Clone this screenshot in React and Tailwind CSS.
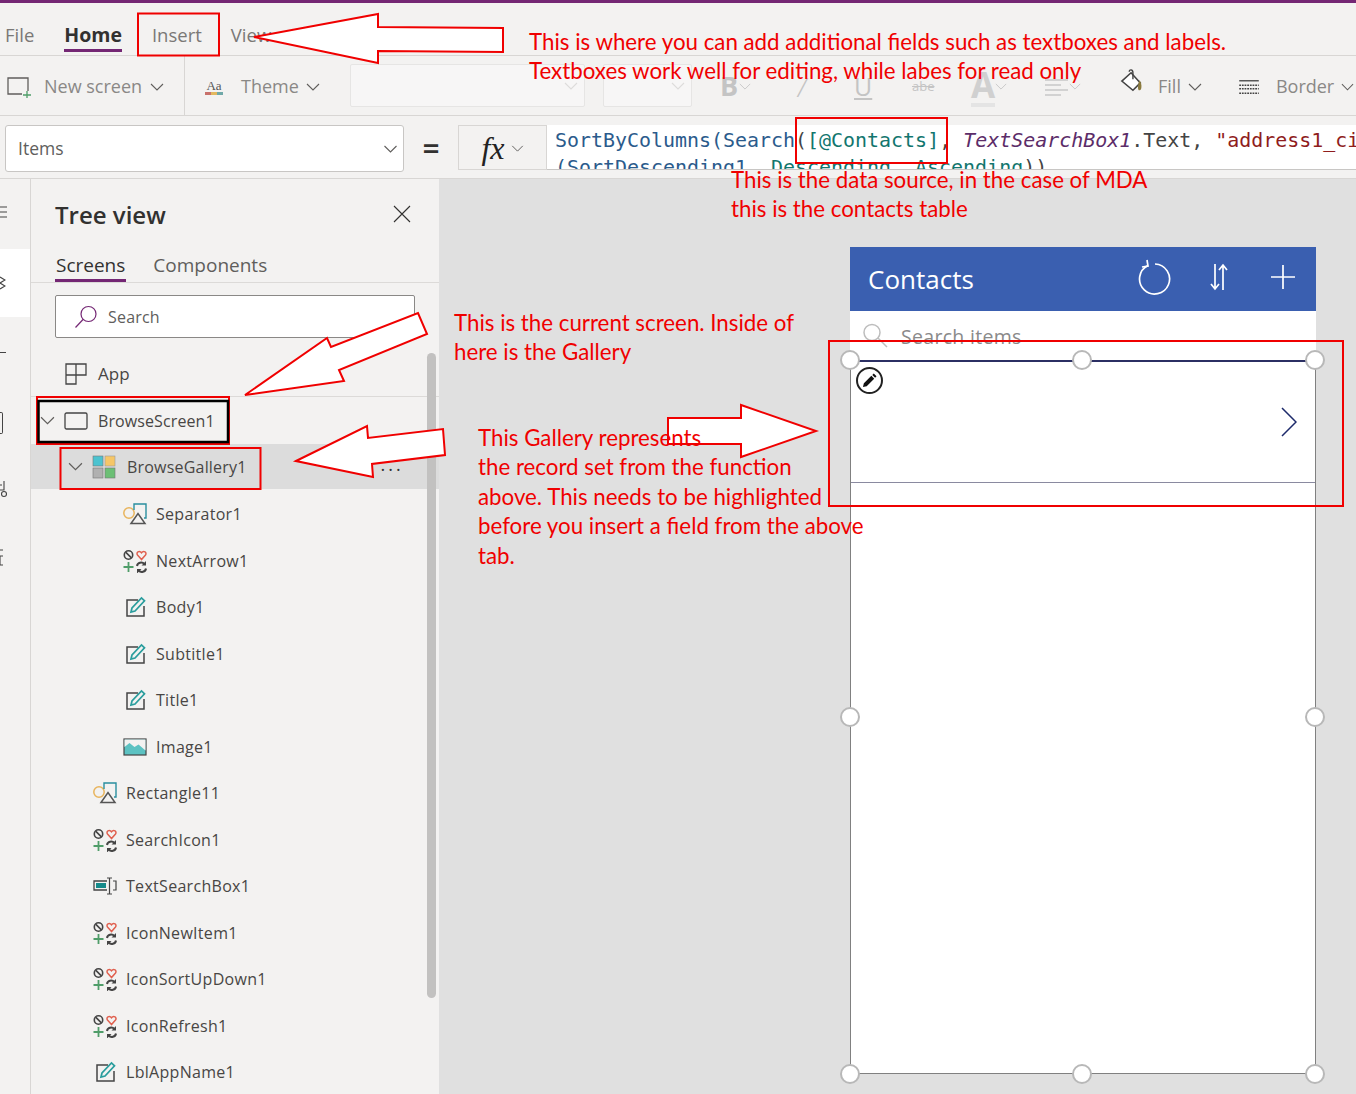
import React from 'react';

const Chevron = ({ className = 'w-[14px] h-[8px]', color = '#605e5c' }) => (
  <svg viewBox="0 0 14 8" className={className} fill="none" stroke={color} strokeWidth="1.1">
    <path d="M1 1l6 6 6-6" />
  </svg>
);

// little icons in the tree
const ControlsIcon = () => (
  <svg viewBox="0 0 24 24" className="w-[24px] h-[24px]" fill="none">
    <circle cx="5.5" cy="6" r="4.2" stroke="#444" strokeWidth="1.6" />
    <path d="M2.600 3.100l5.800 5.800" stroke="#444" strokeWidth="1.6" />
    <path d="M18.500 10.500l-4-4.500c-1.800-2.400 1.800-5 4-2.200 2.200-2.800 5.800-.2 4 2.200z" stroke="#e0604f" strokeWidth="1.500" />
    <path d="M0.500 18h10M5.500 13v10" stroke="#4f9d69" strokeWidth="1.800" />
    <path d="M14 17c.5-3.500 5-4.500 7.500-2M23 19.500c-.5 3.500-5 4.500-7.500 2" stroke="#444" strokeWidth="2" />
    <path d="M23 12v4.500h-4.500zM14 24.500V20h4.500z" fill="#444" />
  </svg>
);

const EditIcon = () => (
  <svg viewBox="0 0 24 24" className="w-[24px] h-[24px]" fill="none">
    <path d="M15 5H4v16h17V11" stroke="#444" strokeWidth="1.500" />
    <path d="M8 17l1-4L18.500 3l3 2.800L12 16z" stroke="#2a9d9d" strokeWidth="1.700" />
  </svg>
);

const ShapesIcon = () => (
  <svg viewBox="0 0 24 24" className="w-[24px] h-[24px]" fill="none">
    <circle cx="6" cy="11" r="5.200" stroke="#e8b45c" strokeWidth="1.500" />
    <path d="M11 8V2h12v14h-2" stroke="#2a8f9f" strokeWidth="1.400" />
    <path d="M8 21.500l7-10 7 10z" stroke="#555" strokeWidth="1.500" fill="#f3f2f1" />
  </svg>
);

const ImageIcon = () => (
  <svg viewBox="0 0 24 24" className="w-[24px] h-[24px]" fill="none">
    <rect x="1" y="4" width="22" height="16" fill="#5cc2c2" stroke="#444" strokeWidth="1.200" />
    <path d="M1.500 12l5-4 5 4 4-2.500 7 6V4.600h-21z" fill="#f3f2f1" />
  </svg>
);

const TextBoxIcon = () => (
  <svg viewBox="0 0 24 24" className="w-[24px] h-[24px]" fill="none">
    <path d="M14 7H1v9h13" stroke="#444" strokeWidth="1.300" />
    <rect x="3" y="9" width="10" height="5" fill="#158a8a" />
    <path d="M14 4h5M14 20h5M16.500 4v16M20 7h3v9h-3" stroke="#444" strokeWidth="1.200" />
  </svg>
);

const GalleryIcon = () => (
  <svg viewBox="0 0 24 24" className="w-[24px] h-[24px]">
    <rect x="1" y="1" width="10" height="10" fill="#4cc3d0" stroke="#777" strokeWidth=".6" />
    <rect x="13" y="1" width="10" height="10" fill="#f6c667" stroke="#999" strokeWidth=".6" />
    <rect x="1" y="13" width="10" height="10" fill="#b0b0b0" stroke="#777" strokeWidth=".6" />
    <rect x="13" y="13" width="10" height="10" fill="#6cbf75" stroke="#777" strokeWidth=".6" />
  </svg>
);

const ScreenIcon = () => (
  <svg viewBox="0 0 24 24" className="w-[24px] h-[24px]" fill="none">
    <rect x="1" y="4" width="22" height="16" rx="1.500" stroke="#444" strokeWidth="1.300" />
  </svg>
);

const AppIcon = () => (
  <svg viewBox="0 0 24 24" className="w-[24px] h-[24px]" fill="none" stroke="#444" strokeWidth="1.300">
    <path d="M2 13h20V2H12v20H2V2h10" />
  </svg>
);

const treeRows = [
  { name: 'Separator1', Icon: ShapesIcon, level: 3 },
  { name: 'NextArrow1', Icon: ControlsIcon, level: 3 },
  { name: 'Body1', Icon: EditIcon, level: 3 },
  { name: 'Subtitle1', Icon: EditIcon, level: 3 },
  { name: 'Title1', Icon: EditIcon, level: 3 },
  { name: 'Image1', Icon: ImageIcon, level: 3 },
  { name: 'Rectangle11', Icon: ShapesIcon, level: 2 },
  { name: 'SearchIcon1', Icon: ControlsIcon, level: 2 },
  { name: 'TextSearchBox1', Icon: TextBoxIcon, level: 2 },
  { name: 'IconNewItem1', Icon: ControlsIcon, level: 2 },
  { name: 'IconSortUpDown1', Icon: ControlsIcon, level: 2 },
  { name: 'IconRefresh1', Icon: ControlsIcon, level: 2 },
  { name: 'LblAppName1', Icon: EditIcon, level: 2 },
];

const TreeRow = ({ name, Icon, level }) => (
  <div className={`h-[46.5px] flex items-center ${level === 3 ? 'pl-[92px]' : 'pl-[62px]'}`}>
    <Icon />
    <span className="ml-[9px] text-[16px] tracking-[0.3px] text-[#484644]">{name}</span>
  </div>
);

const Handle = ({ className }) => (
  <div className={`absolute w-[20px] h-[20px] rounded-full bg-white border-2 border-[#b8b8b8] ${className}`} />
);

const RibbonLabel = ({ children, className = '' }) => (
  <span className={`text-[18px] text-[#8a8886] ${className}`}>{children}</span>
);

const Ribbon = () => (
  <div className="h-[60px] shrink-0 flex items-center pt-[2px] border-b border-[#d8d6d4] bg-[#f3f2f1]">
    <div className="w-[185px] self-stretch -mt-[2px] flex items-center pt-[2px] pl-[6px] border-r border-[#d8d6d4]">
      <svg viewBox="0 0 26 22" className="w-[26px] h-[22px]" fill="none">
        <path d="M22 15V2H2v16h14" stroke="#605e5c" strokeWidth="1.300" />
        <path d="M17 19h8M21 15v8" stroke="#4f9d69" strokeWidth="1.300" />
      </svg>
      <RibbonLabel className="ml-[12px]">New screen</RibbonLabel>
      <Chevron className="w-[14px] h-[8px] ml-[8px]" />
    </div>
    <div className="w-[165px] flex items-center pl-[19px]">
      <div className="w-[20px] flex flex-col items-center leading-none">
        <span className="text-[13px] text-[#555] font-['Liberation_Serif',serif]">Aa</span>
        <span className="w-[18px] h-[3px] bg-[linear-gradient(90deg,#c8716b_33%,#e3b85f_33%,#e3b85f_66%,#6fa8a8_66%)]" />
      </div>
      <RibbonLabel className="ml-[17px]">Theme</RibbonLabel>
      <Chevron className="w-[14px] h-[8px] ml-[7px]" />
    </div>
    <div className="w-[235px] h-[43px] -mt-[2px] rounded-[2px] border border-[#e6e5e4] bg-[#f7f6f6] flex items-center justify-end pr-[6px]">
      <Chevron color="#dddcdb" />
    </div>
    <div className="w-[89px] h-[43px] -mt-[2px] ml-[18px] rounded-[2px] border border-[#e6e5e4] bg-[#f7f6f6] flex items-center justify-end pr-[6px]">
      <Chevron color="#dddcdb" />
    </div>
    <div className="w-[35px] ml-[28px] flex items-center">
      <span className="text-[27px] font-bold text-[#c4c4c4]">B</span>
      <Chevron className="w-[12px] h-[7px] ml-[1px]" color="#c8c8c8" />
    </div>
    <span className="ml-[43px] w-[16px] text-[29px] leading-[30px] text-[#c4c4c4] font-['Liberation_Serif',serif] italic">/</span>
    <span className="ml-[40px] w-[20px] text-[25px] text-[#c4c4c4] underline">U</span>
    <span className="ml-[38px] w-[24px] text-[13px] text-[#c4c4c4] line-through">abe</span>
    <div className="ml-[35px] w-[40px] flex items-center">
      <span className="text-[35px] font-bold text-[#d0d0d0] border-b-4 border-[#e4e4e4] leading-[36px]">A</span>
      <Chevron className="w-[12px] h-[7px]" color="#c8c8c8" />
    </div>
    <div className="ml-[34px] w-[40px] flex items-center">
      <svg viewBox="0 0 24 18" className="w-[24px] h-[18px]" stroke="#c8c8c8" strokeWidth="1.300">
        <path d="M0 2h23M0 7h16M0 12h23M0 17h16" />
      </svg>
      <Chevron className="w-[12px] h-[7px]" color="#c8c8c8" />
    </div>
    <svg viewBox="0 0 26 28" className="ml-[35px] w-[24px] h-[26px] -mt-[10px]" fill="none">
      <path d="M2 13l10-9 10 11-8 8z" stroke="#444" strokeWidth="1.700" fill="#fff" />
      <path d="M10 3c0-3 4-3 4 1v7" stroke="#444" strokeWidth="1.500" />
      <path d="M21 12c3 3 3 11 0 11-2 0-2-5 0-11z" fill="#8a7a3d" />
    </svg>
    <RibbonLabel className="ml-[14px]">Fill</RibbonLabel>
    <Chevron className="w-[14px] h-[8px] ml-[7px]" />
    <svg viewBox="0 0 24 18" className="ml-[36px] w-[22px] h-[16px]" fill="none" stroke="#444">
      <path d="M1 2h22" strokeWidth="1.500" />
      <path d="M1 7h22M1 11h22M1 16h22" strokeWidth="1.500" strokeDasharray="2 1" />
    </svg>
    <RibbonLabel className="ml-[16px]">Border</RibbonLabel>
    <Chevron className="w-[13px] h-[8px] ml-[7px]" />
  </div>
);

const FormulaBar = () => (
  <div className="h-[63px] shrink-0 flex items-start pt-[9px] pl-[5px] border-b border-[#d8d6d4] bg-[#f3f2f1]">
    <div className="w-[399px] h-[47px] flex items-center justify-between pl-[12px] pr-[5px] bg-white border border-[#c8c6c4] rounded-[3px]">
      <span className="text-[17.500px] text-[#605e5c]">Items</span>
      <Chevron className="w-[15px] h-[8px]" />
    </div>
    <span className="w-[54px] h-[47px] flex items-center justify-center text-[30px] font-semibold text-[#323130]">=</span>
    <div className="w-[89px] h-[45px] flex items-center justify-center gap-[6px] border border-[#d8d6d4] bg-[#f3f2f1]">
      <span className="text-[32px] italic leading-none text-[#222] font-['Liberation_Serif',serif]">fx</span>
      <Chevron className="w-[13px] h-[7px] mt-[2px]" />
    </div>
    <div className="flex-1 h-[45px] overflow-hidden bg-white border-b border-[#c8c6c4] pl-[8px] pt-[2px] whitespace-nowrap font-['DejaVu_Sans_Mono',monospace] text-[19.950px] leading-[27px] text-[#444]">
      <div>
        <span className="text-[#2b5b8c]">SortByColumns(Search</span>
        <span>(</span>
        <span className="text-[#12766e]">[@Contacts]</span>
        <span>, </span>
        <span className="italic text-[#5c2d69]">TextSearchBox1</span>
        <span>.Text, </span>
        <span className="text-[#8f1d1d]">"address1_city"</span>
      </div>
      <div>
        <span className="text-[#2b5b8c]">(SortDescending1, </span>
        <span className="text-[#12766e]">Descending, Ascending</span>
        <span>))</span>
      </div>
    </div>
  </div>
);

const Rail = () => (
  <div className="w-[31px] shrink-0 border-r border-[#d8d6d4] bg-[#f3f2f1] overflow-hidden pt-[27px]">
    <svg viewBox="0 0 8 12" className="w-[8px] h-[12px]" stroke="#444" strokeWidth="1.100">
      <path d="M0 1h7M0 6h7M0 11h7" />
    </svg>
    <div className="mt-[31px] h-[68px] bg-white flex items-center">
      <svg viewBox="0 0 6 16" className="w-[6px] h-[16px]" fill="none" stroke="#444" strokeWidth="1.200">
        <path d="M0 2l5 3-5 3 5 3-5 3" />
      </svg>
    </div>
    <div className="mt-[35px] w-[6px] h-px bg-[#444]" />
    <div className="mt-[59px] w-[3px] h-[22px] border-r border-y border-[#444] rounded-r-[2px]" />
    <svg viewBox="0 0 8 18" className="mt-[46px] w-[8px] h-[18px]" fill="none" stroke="#444" strokeWidth="1.100">
      <path d="M0 10h4V1M0 5h2" />
      <circle cx="4" cy="14" r="2.500" />
    </svg>
    <svg viewBox="0 0 4 18" className="mt-[50px] w-[4px] h-[18px]" fill="none" stroke="#444" strokeWidth="1.100">
      <path d="M0 2h3M3 8H0v9h3" />
    </svg>
  </div>
);

const TreePanel = () => (
  <div className="relative w-[408px] shrink-0 bg-[#f3f2f1] overflow-hidden">
    <div className="h-[72px] flex items-center justify-between pl-[24px] pr-[28px]">
      <span className="text-[24px] font-semibold text-[#323130]">Tree view</span>
      <svg viewBox="0 0 18 18" className="w-[18px] h-[18px] -mt-[3px]" stroke="#323130" strokeWidth="1.100">
        <path d="M1 1l16 16M17 1L1 17" />
      </svg>
    </div>
    <div className="h-[32px] flex items-start gap-[27px] pl-[24px] border-b border-[#dcdad8]">
      <span className="text-[19px] leading-[28px] font-medium text-[#323130] border-b-[3px] border-[#742774] h-[31px] px-px">Screens</span>
      <span className="text-[19px] leading-[28px] text-[#605e5c]">Components</span>
    </div>
    <div className="mt-[12px] ml-[24px] w-[360px] h-[43px] flex items-center pl-[18px] bg-white border border-[#8a8886] rounded-[2px]">
      <svg viewBox="0 0 24 24" className="w-[24px] h-[24px]" fill="none" stroke="#742774" strokeWidth="1.200">
        <circle cx="14.500" cy="9" r="7.500" />
        <path d="M9 14.500L1.500 22.500" />
      </svg>
      <span className="ml-[10px] mt-[1px] text-[16px] tracking-[0.2px] text-[#605e5c]">Search</span>
    </div>
    <div className="mt-[13px] h-[46px] flex items-center pl-[33px] border-b border-[#dcdad8]">
      <AppIcon />
      <span className="ml-[10px] text-[17px] text-[#484644]">App</span>
    </div>
    <div className="h-[47px] flex items-center pl-[9px]">
      <Chevron className="w-[15px] h-[9px]" />
      <div className="ml-[9px]"><ScreenIcon /></div>
      <span className="ml-[10px] text-[16px] tracking-[0.1px] text-[#484644]">BrowseScreen1</span>
    </div>
    <div className="h-[45px] flex items-center pl-[37px] bg-[#dcdcdc]">
      <Chevron className="w-[15px] h-[9px]" />
      <div className="ml-[9px]"><GalleryIcon /></div>
      <span className="ml-[11px] text-[16px] tracking-[0.2px] text-[#484644]">BrowseGallery1</span>
      <span className="ml-[134px] mb-[4px] text-[18px] tracking-[3px] text-[#333]">...</span>
    </div>
    <div className="pt-[2px]">
      {treeRows.map((row) => (
        <TreeRow key={row.name} {...row} />
      ))}
    </div>
    <div className="absolute left-[396px] top-[174px] w-[9px] h-[645px] rounded-full bg-[#c2c1c0]" />
  </div>
);

const PhoneScreen = () => (
  <div className="relative w-[466px] h-[827px] mt-[68px] ml-[411px] bg-white">
    <div className="h-[64px] bg-[#3a5fb0] flex items-center pl-[18px] pr-[20px]">
      <span className="text-[26px] text-white flex-1">Contacts</span>
      <svg viewBox="0 0 36 36" className="w-[36px] h-[36px] -mt-[4px]" fill="none" stroke="#fff" strokeWidth="1.700">
        <path d="M11 6.500a15 15 0 1 0 7-1.500" />
        <path d="M10 1l1 6-6 1" />
      </svg>
      <svg viewBox="0 0 20 28" className="ml-[36px] w-[20px] h-[28px] -mt-[4px]" fill="none" stroke="#fff" strokeWidth="1.700">
        <path d="M6 1v25M2 21l4 5 4-5M14 27V2M10 7l4-5 4 5" />
      </svg>
      <svg viewBox="0 0 26 26" className="ml-[41px] w-[26px] h-[26px] -mt-[4px]" stroke="#fff" strokeWidth="1.700">
        <path d="M1 13h24M13 1v24" />
      </svg>
    </div>
    <div className="h-[49px] flex items-start pl-[12px] pt-[12px]">
      <svg viewBox="0 0 26 26" className="w-[26px] h-[26px]" fill="none" stroke="#bdbdbd" strokeWidth="1.500">
        <circle cx="10" cy="9.500" r="8" />
        <path d="M16 15l9 9" />
      </svg>
      <span className="ml-[13px] -mt-[1px] text-[19.500px] tracking-[0.3px] text-[#8a8a8a]">Search items</span>
    </div>
    <div className="relative h-[714px] border-x border-b border-[#808080] border-t-2 border-t-[#2b2f63]">
      <div className="h-[121px] border-b border-[#8a8aa0] relative">
        <div className="absolute left-[5px] top-[5px] w-[27px] h-[27px] rounded-full border-2 border-[#222] bg-white flex items-center justify-center">
          <svg viewBox="0 0 16 16" className="w-[15px] h-[15px]" fill="#111">
            <path d="M1 15l1-4 8-8 3 3-8 8zM11 2l1.500-1.500 3 3L14 5z" />
          </svg>
        </div>
        <svg viewBox="0 0 16 30" className="absolute left-[430px] top-[45px] w-[16px] h-[30px]" fill="none" stroke="#1d2a6b" strokeWidth="1.500">
          <path d="M1 1l14 14L1 29" />
        </svg>
      </div>
    </div>
    <Handle className="left-[-10px] top-[103px]" />
    <Handle className="left-[222px] top-[103px]" />
    <Handle className="left-[455px] top-[103px]" />
    <Handle className="left-[-10px] top-[460px]" />
    <Handle className="left-[455px] top-[460px]" />
    <Handle className="left-[-10px] top-[817px]" />
    <Handle className="left-[222px] top-[817px]" />
    <Handle className="left-[455px] top-[817px]" />
  </div>
);

// red callouts laid over the screenshot
const Note = ({ className, children }) => (
  <div className={`absolute whitespace-nowrap font-['Lato',sans-serif] text-[#f00000] text-[22.300px] leading-[29.400px] ${className}`}>
    {children}
  </div>
);

const Callouts = () => (
  <div className="absolute inset-0 pointer-events-none">
    <svg viewBox="0 0 1356 1094" className="absolute inset-0 w-[1356px] h-[1094px]" fill="none" stroke="#f00000" strokeWidth="2">
      <rect x="138" y="13.500" width="81" height="42" />
      <rect x="796" y="118" width="151" height="45" />
      <rect x="37" y="397" width="192" height="47" />
      <rect x="38.500" y="401" width="189.500" height="41" stroke="#000" strokeWidth="2.500" />
      <rect x="60.500" y="448" width="200" height="41" />
      <rect x="829" y="341" width="514" height="165" />
      <polygon fill="#fff" points="254,37 378,14 378,27 503,28 503,52 378,51 378,63" />
      <polygon fill="#fff" points="245,395 327,338 331,347 418,313 427,334 339,370 344,381" />
      <polygon fill="#fff" points="296,461 367,426 368,438 443,429 445,455 372,464 373,477" />
      <polygon fill="#fff" points="668,418 741,418 741,405 816,431 741,457 741,444 668,444" />
    </svg>
    <Note className="left-[529px] top-[27px]">
      This is where you can add additional fields such as textboxes and labels.
      <br />
      Textboxes work well for editing, while labes for read only
    </Note>
    <Note className="left-[731px] top-[165px]">
      This is the data source, in the case of MDA
      <br />
      this is the contacts table
    </Note>
    <Note className="left-[454px] top-[308px]">
      This is the current screen. Inside of
      <br />
      here is the Gallery
    </Note>
    <Note className="left-[478px] top-[423px]">
      This Gallery represents
      <br />
      the record set from the function
      <br />
      above. This needs to be highlighted
      <br />
      before you insert a field from the above
      <br />
      tab.
    </Note>
  </div>
);

const App = () => {
  return (
    <div className="relative w-[1356px] h-[1094px] overflow-hidden flex flex-col bg-[#f3f2f1] font-['Open_Sans',sans-serif]">
      <div className="h-[3px] shrink-0 bg-[#742774]" />
      <div className="h-[53px] shrink-0 flex items-start pl-[5px] pt-[19px] text-[18.500px] leading-[26px] text-[#7a7876] border-b border-[#d8d6d4]">
        <span>File</span>
        <span className="ml-[30px] h-[30px] text-[19.500px] font-bold text-[#323130] border-b-[3px] border-[#742774]">Home</span>
        <span className="ml-[30px]">Insert</span>
        <span className="ml-[29px]">View</span>
      </div>
      <Ribbon />
      <FormulaBar />
      <div className="flex-1 min-h-0 flex">
        <Rail />
        <TreePanel />
        <div className="flex-1 min-w-0 bg-[#e0e0e0]">
          <PhoneScreen />
        </div>
      </div>
      <Callouts />
    </div>
  );
};

export default App;
